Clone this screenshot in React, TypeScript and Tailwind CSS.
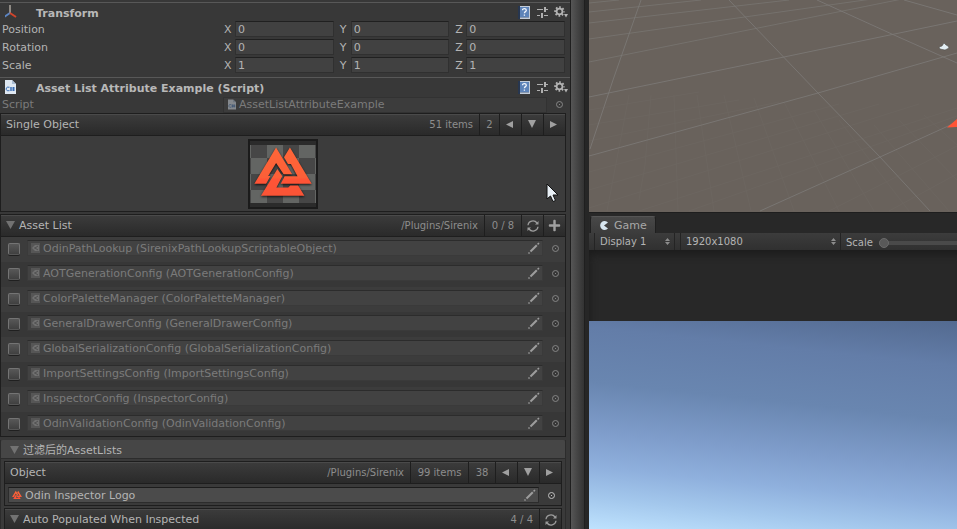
import React from "react";
import { FaPlus } from "react-icons/fa";

const UI = "font-['DejaVu_Sans','Noto_Sans_CJK_SC',sans-serif]";

const assets = [
  "OdinPathLookup (SirenixPathLookupScriptableObject)",
  "AOTGenerationConfig (AOTGenerationConfig)",
  "ColorPaletteManager (ColorPaletteManager)",
  "GeneralDrawerConfig (GeneralDrawerConfig)",
  "GlobalSerializationConfig (GlobalSerializationConfig)",
  "ImportSettingsConfig (ImportSettingsConfig)",
  "InspectorConfig (InspectorConfig)",
  "OdinValidationConfig (OdinValidationConfig)",
];

function HelpIcon() {
  return (
    <svg width="14" height="15" viewBox="0 0 14 15">
      <rect x="0" y="1" width="12" height="13" fill="#c3ccd8" />
      <rect x="0" y="1" width="2" height="13" fill="#27364f" />
      <rect x="2" y="2" width="9" height="10" fill="#5d83b8" />
      <rect x="2" y="12" width="9" height="1" fill="#8797ad" />
      <path d="M4.500 5.200c0-2 3.800-2 3.800.1 0 1.400-1.900 1.300-1.900 3M6.400 9.500v1.300" fill="none" stroke="#f2f6fc" strokeWidth="1.300" />
    </svg>
  );
}

function PresetIcon() {
  return (
    <svg width="12" height="12" viewBox="0 0 12 12" fill="#b0b0b0">
      <rect x="0" y="3" width="6" height="1" />
      <rect x="9" y="3" width="2" height="1" />
      <rect x="7" y="1" width="2" height="5" />
      <rect x="0" y="9" width="3" height="1" />
      <rect x="4" y="7" width="2" height="5" />
      <rect x="7" y="9" width="4" height="1" />
    </svg>
  );
}

function GearIcon() {
  return (
    <svg width="14" height="12" viewBox="0 0 14 12">
      <circle cx="5.500" cy="5.500" r="2.900" fill="none" stroke="#b4b4b4" strokeWidth="1.700" />
      <circle cx="5.500" cy="5.500" r="4.400" fill="none" stroke="#b4b4b4" strokeWidth="1.700" strokeDasharray="1.728 1.728" strokeDashoffset="0.864" />
      <path d="M10 8h4l-2 3.500z" fill="#b4b4b4" />
    </svg>
  );
}

function AxisIcon() {
  return (
    <svg width="15" height="14" viewBox="0 0 15 14" fill="none" strokeWidth="2">
      <path d="M5 0v8" stroke="#8f8a84" />
      <path d="M5 8L-1 12" stroke="#5c86c4" />
      <path d="M5 8l6 4" stroke="#d1452c" />
    </svg>
  );
}

function ScriptIcon({ size, dim }: { size: number; dim?: boolean }) {
  return (
    <svg width={size} height={size + 3} viewBox="0 0 11 14" opacity={dim ? 0.45 : 1}>
      <path d="M0 0h7l4 4v10H0z" fill="#dfe8f2" />
      <path d="M7 0v4h4z" fill="#a9bcd3" />
      <path d="M4.500 7.200H2.200L1.300 8v1.800l.9.900h2.300M6 7v4M8.500 7v4M5 8h5M5 10h5" fill="none" stroke="#3a6eb5" strokeWidth="1" />
    </svg>
  );
}

function AssetIcon() {
  return (
    <svg width="9" height="10" viewBox="0 0 9 10" className="shrink-0">
      <rect width="9" height="10" fill="#565656" />
      <path d="M1 5l3-3h4v6H4z" fill="#707070" />
      <path d="M4 5l3-2M4 5l3 2M4 5H3" stroke="#505050" strokeWidth="1" />
    </svg>
  );
}

function Valknut({ width, height, shadow }: { width: number; height: number; shadow?: boolean }) {
  return (
    <svg width={width} height={height} viewBox="0 0 176 150" className={shadow ? "drop-shadow-[0_1px_1px_rgba(0,0,0,0.8)]" : ""}>
      <defs>
        <linearGradient id="ember" x1="0" y1="0" x2="0" y2="150" gradientUnits="userSpaceOnUse">
          <stop offset="0" stopColor="#ff6638" />
          <stop offset="0.620" stopColor="#fb5f38" />
          <stop offset="0.640" stopColor="#ff5436" />
          <stop offset="1" stopColor="#f95436" />
        </linearGradient>
      </defs>
      <g fill="url(#ember)">
        <path d="M67 1L116 82H90L67 48L43 87H50L37 111H1z" />
        <path d="M109 1L175 111H81L93 88H132L112 51H103L91 30z" />
        <path d="M71 66L86 88L68 122H104L110 116H134L153 147H21z" />
      </g>
    </svg>
  );
}

function RefreshIcon() {
  return (
    <svg width="12" height="12" viewBox="0 0 12 12" fill="none" stroke="#9c9c9c" strokeWidth="1.300">
      <path d="M1 5.200C1.500 .6 7.500-.4 10 3M11 6.800C10.500 11.400 4.500 12.400 2 9" />
      <path d="M11.500 1v3.500H8zM.5 11V7.500H4z" fill="#9c9c9c" stroke="none" />
    </svg>
  );
}

function PencilIcon() {
  return (
    <svg width="12" height="12" viewBox="0 0 12 12" fill="none" stroke="#9d9d9d">
      <path d="M2.500 9.500L8.800 3.200" strokeWidth="2" />
      <path d="M9.600 2.400L11 1M.5 11.500l1-1" strokeWidth="1.500" />
    </svg>
  );
}

function PickerButton({ bright }: { bright?: boolean }) {
  return (
    <button aria-label="Select object" className={`flex w-[9px] shrink-0 justify-center ${bright ? "text-[#c0c0c0]" : "text-[#858585]"}`}>
      <svg width="9" height="9" viewBox="0 0 9 9">
        <circle cx="4.500" cy="4.500" r="3" fill="none" stroke="currentColor" />
        <rect x="4" y="4" width="1" height="1" fill="currentColor" />
      </svg>
    </button>
  );
}

function Triangle({ dir }: { dir: "left" | "down" | "right" }) {
  const d = { left: "M7 1v7L0 4.500z", down: "M0 0h8L4 8z", right: "M0 1v7l7-3.500z" }[dir];
  return (
    <svg width="9" height="9" viewBox="0 0 9 9" fill="#a0a0a0">
      <path d={d} />
    </svg>
  );
}

function Foldout({ label }: { label: string }) {
  return (
    <button className="flex items-center gap-1 text-[#b4b4b4]">
      <svg width="9" height="9" viewBox="0 0 9 9" fill="#727272">
        <path d="M0 0h9L4.500 8z" />
      </svg>
      {label}
    </button>
  );
}

function Component({ icon, title }: { icon: React.ReactNode; title: string }) {
  return (
    <div className="flex h-[19px] items-center border-t border-[#585858] pr-0.5">
      <div className="flex w-9 shrink-0 pl-[5px]">{icon}</div>
      <h2 className="flex-1 pt-[3px] font-bold text-[#b8b8b8]">{title}</h2>
      <div className="flex items-center gap-[5px]">
        <button aria-label="Help"><HelpIcon /></button>
        <button aria-label="Presets"><PresetIcon /></button>
        <button aria-label="Settings"><GearIcon /></button>
      </div>
    </div>
  );
}

function VectorRow({ label, value }: { label: string; value: string }) {
  return (
    <div className="flex h-[18px] items-start pr-[5px] leading-4">
      <span className="w-[222px] shrink-0 pt-px pl-0.5">{label}</span>
      <div className="flex flex-1 gap-1">
        {["X", "Y", "Z"].map((axis) => (
          <label key={axis} className="flex min-w-0 flex-1 items-start">
            <span className="w-[13px] shrink-0 pt-px pl-0.5">{axis}</span>
            <input
              aria-label={`${label} ${axis}`}
              defaultValue={value}
              className="h-4 w-full min-w-0 border border-[#303030] border-t-[#202020] bg-[#414141] px-0.5 pt-0.5 text-[#b4b4b4] outline-none"
            />
          </label>
        ))}
      </div>
    </div>
  );
}

function ListHeader({ title, children }: { title: React.ReactNode; children: React.ReactNode }) {
  return (
    <div className="flex h-[23px] border-y border-[#1e1e1e] bg-linear-to-b from-[#3c3c3c] to-[#2a2a2a] shadow-[inset_0_1px_0_#4a4a4a]">
      <div className="flex flex-1 items-center pl-[5px]">{title}</div>
      {children}
    </div>
  );
}

const cell = "flex items-center justify-center border-l border-[#1e1e1e] text-[10px] text-[#8d8d8d]";
const note = "flex items-center pr-1.5 text-[10px] text-[#8d8d8d]";

function Pager() {
  return (
    <>
      <button aria-label="Previous page" className={`${cell} w-[22px]`}><Triangle dir="left" /></button>
      <button aria-label="Expand list" className={`${cell} w-[22px]`}><Triangle dir="down" /></button>
      <button aria-label="Next page" className={`${cell} w-[22px]`}><Triangle dir="right" /></button>
    </>
  );
}

function ObjectField({ icon, label, bright }: { icon: React.ReactNode; label: string; bright?: boolean }) {
  return (
    <div className={`flex h-4 min-w-0 flex-1 items-center gap-[3px] border pr-0.5 pl-[3px] ${bright ? "border-[#2c2c2c] border-t-[#1c1c1c] bg-[#4b4b4b] text-[#b4b4b4]" : "border-[#3a3a3a] border-t-[#2c2c2c] bg-[#424242] text-[#7b7b7b]"}`}>
      {icon}
      <span className="flex-1 truncate pt-0.5 leading-[14px]">{label}</span>
      <button aria-label={`Edit ${label}`}><PencilIcon /></button>
    </div>
  );
}

function AssetRow({ name }: { name: string }) {
  return (
    <li className="flex h-[25px] items-start bg-[#3c3c3c] pt-[3px] pr-[5px] pl-[7px] last:h-6 even:bg-[#373737]">
      <input
        type="checkbox"
        aria-label={name}
        className="mt-[3px] mr-[7px] size-3 shrink-0 appearance-none rounded-[2px] border border-[#747474] border-b-[#565656] bg-linear-to-b from-[#585858] to-[#404040] shadow-[0_1px_0_#202020]"
      />
      <ObjectField icon={<AssetIcon />} label={name} />
      <div className="ml-2 flex h-4 items-center"><PickerButton /></div>
    </li>
  );
}

function Inspector() {
  return (
    <section className="flex min-w-0 bg-[#383838] text-[#b4b4b4]">
      <div className="min-w-0 flex-1 overflow-hidden pt-0.5">
        <Component icon={<AxisIcon />} title="Transform" />
        <VectorRow label="Position" value="0" />
        <VectorRow label="Rotation" value="0" />
        <VectorRow label="Scale" value="1" />
        <div className="mt-[2px]">
          <Component icon={<ScriptIcon size={11} />} title="Asset List Attribute Example (Script)" />
        </div>
        <div className="flex h-[17px] items-center pr-[6px] text-[#7b7b7b]">
          <span className="w-[223px] shrink-0 pl-0.5">Script</span>
          <div className="flex h-4 flex-1 items-center gap-[3px] border border-[#323232] bg-[#3c3c3c] pl-1">
            <ScriptIcon size={8} dim />
            <span className="leading-[14px]">AssetListAttributeExample</span>
          </div>
          <div className="ml-2 flex"><PickerButton /></div>
        </div>

        <div className="mr-[4px] border-x border-b border-[#1e1e1e] bg-[#3c3c3c]">
          <ListHeader title="Single Object">
            <span className={note}>51 items</span>
            <span className={`${cell} w-5`}>2</span>
            <Pager />
          </ListHeader>
          <div className="flex h-[75px] items-center justify-center">
            <div className="flex size-[70px] items-center justify-center border-2 border-[#1b1b1b] bg-[#2b2b2b]">
              <div className="flex h-[58px] w-[66px] items-start justify-center bg-[conic-gradient(#636563_25%,#464646_0_50%,#636563_0_75%,#464646_0)] bg-size-[32px_32px] bg-position-[1px_-3px] pt-0.5">
                <Valknut width={58} height={50} shadow />
              </div>
            </div>
          </div>
        </div>

        <div className="mt-[2px] mr-[4px] border-x border-b border-[#1e1e1e]">
          <ListHeader title={<Foldout label="Asset List" />}>
            <span className={note}>/Plugins/Sirenix</span>
            <span className={`${cell} w-[37px]`}>0 / 8</span>
            <button aria-label="Refresh" className={`${cell} w-[22px]`}><RefreshIcon /></button>
            <button aria-label="Add" className={`${cell} w-[22px]`}><FaPlus size={13} color="#a0a0a0" /></button>
          </ListHeader>
          <ul>
            {assets.map((name) => <AssetRow key={name} name={name} />)}
          </ul>
        </div>

        <div className="mt-[3px] mr-[4px] border-x border-[#2c2c2c] bg-[#3a3a3a]">
          <div className="flex h-[19px] items-center rounded-t-[2px] border-b border-[#2c2c2c] bg-[#464646] pt-[3px] pl-[9px]">
            <Foldout label="过滤后的AssetLists" />
          </div>
          <div className="mx-[3px] mt-[2px] border-x border-b border-[#1e1e1e]">
            <ListHeader title="Object">
              <span className={note}>/Plugins/Sirenix</span>
              <span className={`${cell} w-[58px]`}>99 items</span>
              <span className={`${cell} w-[27px]`}>38</span>
              <Pager />
            </ListHeader>
            <div className="flex h-[21px] items-start pt-[3px] pr-[5px] pl-[3px]">
              <ObjectField bright icon={<Valknut width={10} height={10} />} label="Odin Inspector Logo" />
              <div className="ml-2 flex h-4 items-center"><PickerButton bright /></div>
            </div>
          </div>
          <div className="mx-[3px] mt-[2px] border-x border-[#1e1e1e]">
            <ListHeader title={<Foldout label="Auto Populated When Inspected" />}>
              <span className={note}>4 / 4</span>
              <button aria-label="Refresh" className={`${cell} w-[22px]`}><RefreshIcon /></button>
            </ListHeader>
          </div>
        </div>
      </div>
      <div className="w-[15px] shrink-0 border-x border-[#1f1f1f] bg-linear-to-r from-[#565656] to-[#333333]" />
      <div className="w-1 shrink-0 bg-[#262626]" />
    </section>
  );
}

function SceneView() {
  return (
    <div className="h-[213px] shrink-0 overflow-hidden border-b border-[#1e1e1e] bg-[#69625c]">
      <svg width="368" height="212" viewBox="0 0 368 212" fill="none">
        <g stroke="#7d7b78">
          <path d="M0 3L30 0M0 12L112 0M0 23L200 0M0 39L290 -2M0 62L368 -12" opacity="0.600" />
          <path d="M0 97L195 57L368 21M0 156L229 93L368 53M171 211L291 157L368 122" opacity="0.800" />
          <path d="M52 0L24 80L1 149M140 0L229 93L291 157L341 211M228 0L305 35L368 63M315 0L368 15" opacity="0.800" />
        </g>
        <g stroke="#77736e" opacity="0.200">
          <path d="M0 110L110 92M0 125L150 100M0 141L190 102M0 172L250 104M0 190L290 104M0 208L330 104M50 211L368 108M100 211L368 116M240 211L368 146M300 211L368 174" />
          <path d="M40 95L18 211M62 95L56 165L50 200M85 95L89 211M108 95L125 211M135 95L162 211M165 98L205 211M195 102L250 211M225 110L285 211M250 120L320 211M285 125L360 211M310 120L368 180M335 115L368 145" />
        </g>
        <path d="M350 47l3-1 2-3 2 2 2 1 1 2-4 2-5-1z" fill="#e3eef3" stroke="#45423f" strokeWidth="0.500" />
        <path d="M358 127.500L368 119v8z" fill="#ff5436" />
      </svg>
    </div>
  );
}

function DropDown({ label, value, width }: { label: string; value: string; width: string }) {
  return (
    <div className={`relative flex h-full items-center border-x border-[#242424] ${width}`}>
      <select aria-label={label} className="h-full w-full appearance-none bg-transparent pl-[5px] text-[10px] text-[#b4b4b4] outline-none">
        <option>{value}</option>
      </select>
      <svg width="5" height="7" viewBox="0 0 5 7" fill="#8c8c8c" className="pointer-events-none absolute right-1">
        <path d="M0 3h5L2.500 0zM0 4h5L2.500 7z" />
      </svg>
    </div>
  );
}

function GameView() {
  return (
    <div className="flex min-h-0 flex-1 flex-col bg-[#282828] pt-[3px]">
      <div className="flex h-[17px] shrink-0 pl-px">
        <button className="flex w-[66px] items-center gap-[6px] rounded-t-[3px] border-x border-t border-[#1f1f1f] border-t-[#555] bg-linear-to-b from-[#484848] to-[#3c3c3c] pt-px pl-[9px] text-[#a8a8a8]">
          <svg width="8" height="9" viewBox="0 0 8 9" fill="#d7e6f0">
            <path d="M8 1.500A4.500 4.500 0 1 0 8 7.500L4 4.500z" />
          </svg>
          Game
        </button>
      </div>
      <div className="flex h-[17px] shrink-0 items-center overflow-hidden bg-linear-to-b from-[#3c3c3c] to-[#303030] pl-[5px] text-[10px]">
        <DropDown label="Display" value="Display 1" width="w-[81px]" />
        <div className="w-[5px]" />
        <DropDown label="Resolution" value="1920x1080" width="w-[161px]" />
        <label className="flex min-w-0 flex-1 items-center gap-[5px] pt-0.5 pl-[5px] text-[#b4b4b4]">
          <span className="w-7">Scale</span>
          <input
            type="range"
            defaultValue="0"
            className="h-1 min-w-0 flex-1 appearance-none bg-[#4a4a4a] [&::-webkit-slider-thumb]:size-[10px] [&::-webkit-slider-thumb]:appearance-none [&::-webkit-slider-thumb]:rounded-full [&::-webkit-slider-thumb]:border [&::-webkit-slider-thumb]:border-[#6a6a6a] [&::-webkit-slider-thumb]:bg-[#595959]"
          />
        </label>
      </div>
      <div className="h-[71px] shrink-0 shadow-[inset_4px_8px_8px_-4px_#1b1b1b]" />
      <div className="flex-1 bg-[linear-gradient(186deg,#536a90_0%,#637da8_18%,#6986b0_40%,#7f9dcb_60%,#8fb0dd_74%,#a3c7ec_86%,#c0e4ff_100%)]" />
    </div>
  );
}

export default function App() {
  return (
    <main className={`relative grid h-screen grid-cols-[589fr_368fr] overflow-hidden text-[11px] leading-[14px] ${UI}`}>
      <Inspector />
      <section className="flex min-w-0 flex-col">
        <SceneView />
        <GameView />
      </section>
      <svg width="13" height="20" viewBox="0 0 13 20" className="pointer-events-none absolute top-[183px] left-[546px]">
        <path d="M1 1v15l3.500-3 2.500 5.500 2.500-1L7 12h5z" fill="#e9f0f6" stroke="#111" />
      </svg>
    </main>
  );
}
